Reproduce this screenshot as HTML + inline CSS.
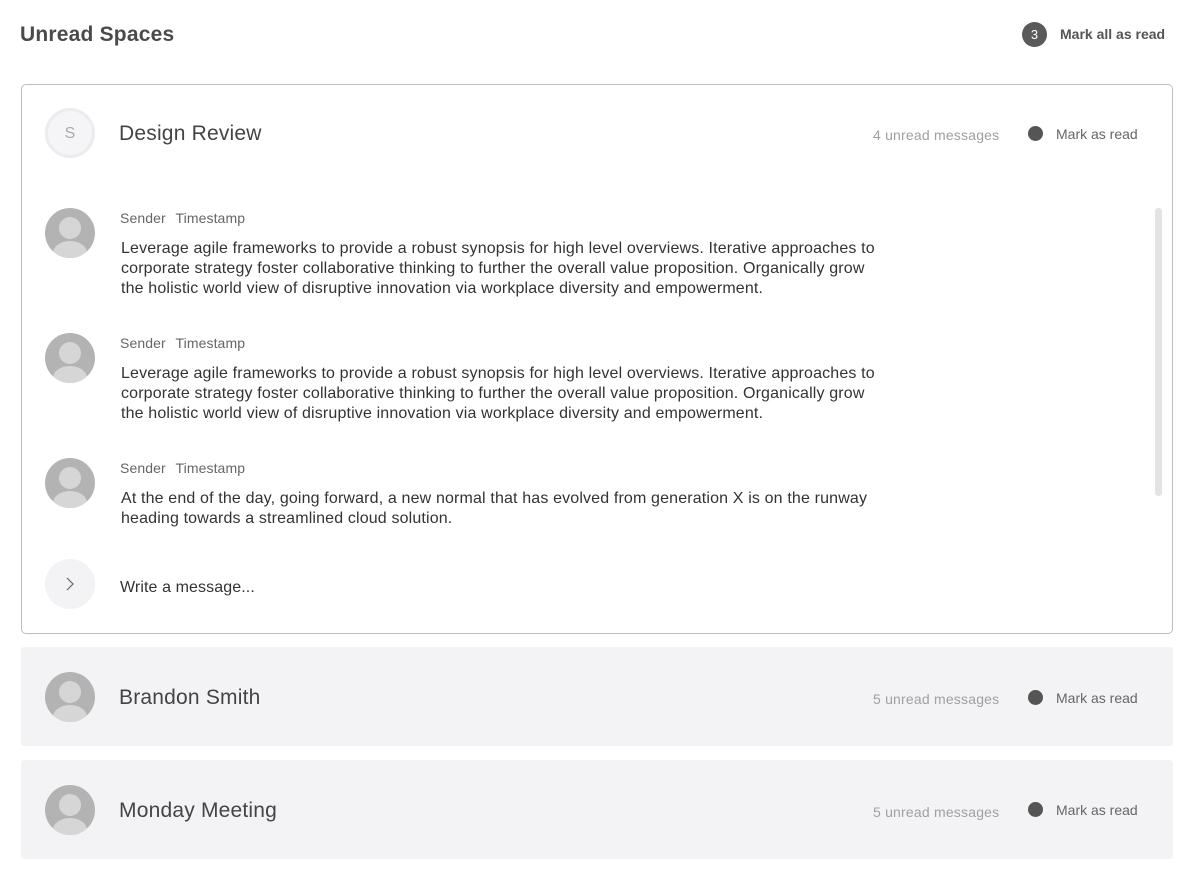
<!DOCTYPE html>
<html><head><meta charset="utf-8"><style>
*{box-sizing:border-box;margin:0;padding:0}
body{width:1192px;height:885px;background:#fff;font-family:"Liberation Sans",sans-serif;color:#333;position:relative;overflow:hidden}
.abs{position:absolute}
.title{left:20px;top:23px;font-size:21px;font-weight:bold;color:#4a4a4a;letter-spacing:0.2px}
.badge{left:1022px;top:22px;width:25px;height:25px;border-radius:50%;background:#5a5a5a;color:#fff;font-size:13px;text-align:center;line-height:25px}
.mall{left:1060px;top:26px;font-size:14px;font-weight:bold;color:#555}
.card{left:21px;top:84px;width:1152px;height:550px;border:1.5px solid #bdbdbd;border-radius:5px}
.gcard{left:21px;width:1152px;height:99px;background:#f3f3f5;border-radius:3px}
.av{width:50px;height:50px;border-radius:50%;background:#b3b3b3;overflow:hidden;left:45px}
.av:before{content:"";position:absolute;left:14px;top:9px;width:22px;height:22px;border-radius:50%;background:#d6d6d6}
.av:after{content:"";position:absolute;left:8px;top:33px;width:34px;height:24px;border-radius:50%;background:#d6d6d6}
.name{left:119px;font-size:21px;color:#444;letter-spacing:0.2px}
.unread{left:873px;font-size:14px;color:#a0a0a0;letter-spacing:0.2px}
.dot{left:1028px;width:15px;height:15px;border-radius:50%;background:#555}
.mar{left:1056px;font-size:14px;color:#666}
.meta{left:120px;font-size:14px;color:#666;word-spacing:6px;letter-spacing:0.1px}
.body{left:121px;white-space:nowrap;font-size:16px;line-height:20px;color:#333;letter-spacing:0.15px}
</style></head><body>
<div class="abs title">Unread Spaces</div>
<div class="abs badge">3</div>
<div class="abs mall">Mark all as read</div>

<div class="abs card"></div>
<div class="abs" style="left:45px;top:108px;width:50px;height:50px;border-radius:50%;border:3px solid #ececee;background:#f5f5f7;text-align:center;line-height:46px;color:#aaa;font-size:16px">S</div>
<div class="abs name" style="top:122px">Design Review</div>
<div class="abs unread" style="top:127px">4 unread messages</div>
<div class="abs dot" style="top:126px"></div>
<div class="abs mar" style="top:126px">Mark as read</div>
<div class="abs" style="left:1155px;top:208px;width:7px;height:288px;border-radius:4px;background:#e3e3e3"></div>

<div class="abs av" style="top:208px"></div>
<div class="abs meta" style="top:210px">Sender Timestamp</div>
<div class="abs body" style="top:239px">Leverage agile frameworks to provide a robust synopsis for high level overviews. Iterative approaches to<br>corporate strategy foster collaborative thinking to further the overall value proposition. Organically grow<br>the holistic world view of disruptive innovation via workplace diversity and empowerment.</div>

<div class="abs av" style="top:333px"></div>
<div class="abs meta" style="top:335px">Sender Timestamp</div>
<div class="abs body" style="top:364px">Leverage agile frameworks to provide a robust synopsis for high level overviews. Iterative approaches to<br>corporate strategy foster collaborative thinking to further the overall value proposition. Organically grow<br>the holistic world view of disruptive innovation via workplace diversity and empowerment.</div>

<div class="abs av" style="top:458px"></div>
<div class="abs meta" style="top:460px">Sender Timestamp</div>
<div class="abs body" style="top:489px">At the end of the day, going forward, a new normal that has evolved from generation X is on the runway<br>heading towards a streamlined cloud solution.</div>

<div class="abs" style="left:45px;top:559px;width:50px;height:50px;border-radius:50%;background:#f3f3f5"></div>
<svg class="abs" style="left:64px;top:576px" width="12" height="16"><path d="M3 2 L9 8 L3 14" fill="none" stroke="#666" stroke-width="1.2"/></svg>
<div class="abs" style="left:120px;top:579px;font-size:16px;color:#333;letter-spacing:0.1px">Write a message...</div>

<div class="abs gcard" style="top:647px"></div>
<div class="abs av" style="top:672px"></div>
<div class="abs name" style="top:686px">Brandon Smith</div>
<div class="abs unread" style="top:691px">5 unread messages</div>
<div class="abs dot" style="top:690px"></div>
<div class="abs mar" style="top:690px">Mark as read</div>

<div class="abs gcard" style="top:760px"></div>
<div class="abs av" style="top:785px"></div>
<div class="abs name" style="top:799px">Monday Meeting</div>
<div class="abs unread" style="top:804px">5 unread messages</div>
<div class="abs dot" style="top:802px"></div>
<div class="abs mar" style="top:802px">Mark as read</div>
</body></html>
